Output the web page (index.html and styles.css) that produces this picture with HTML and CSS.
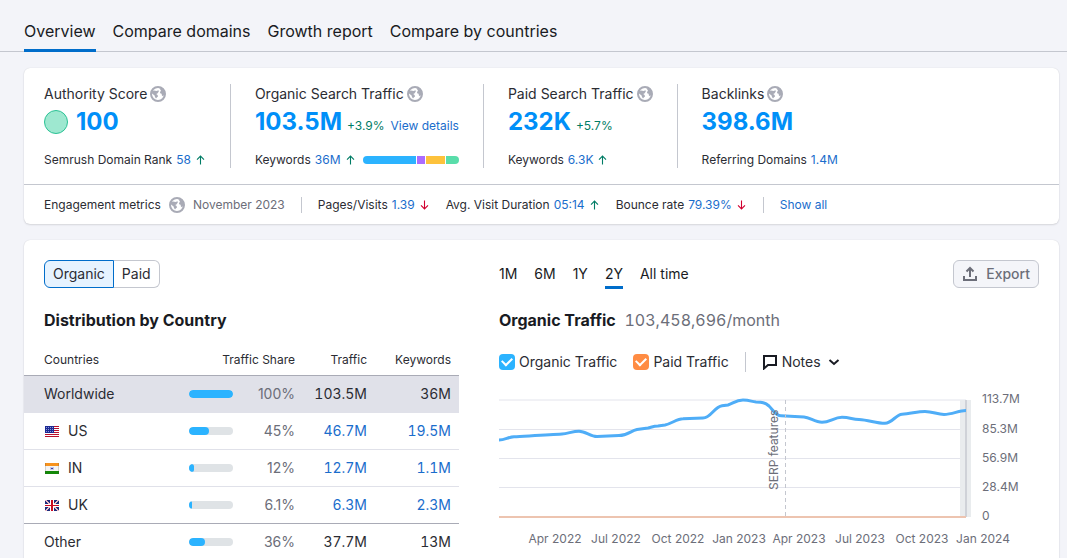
FILE: index.html
```html
<!DOCTYPE html>
<html lang="en">
<head>
<meta charset="utf-8">
<meta name="viewport" content="width=device-width, initial-scale=1">
<title>Domain Overview</title>
<link rel="stylesheet" href="styles.css">
</head>
<body>
<svg class="defs" aria-hidden="true">
  <symbol id="globe" viewBox="0 0 16 16">
    <circle cx="8" cy="8" r="7" fill="none" stroke="currentColor" stroke-width="2"/>
    <path d="M1.500 5L4 4.400L6.500 5L8.600 4.200L8.800 5.600L7.400 7.400L6.200 8L7.600 9L8 10.400L6.800 11.600L6 12.400L5 11L4.600 9.400L2 7.600ZM9.400 2L12 2.600L14.400 5.500L14.500 8.600L13 10.200L11.900 9.400L11.600 7.800L10.200 7.200L10 6L11 4.800Z" fill="currentColor"/>
  </symbol>
  <symbol id="up" viewBox="0 0 10 10"><path d="M5 9.500V1.200M1.500 4.600L5 1.100L8.500 4.600" fill="none" stroke="currentColor" stroke-width="1.100"/></symbol>
  <symbol id="down" viewBox="0 0 10 10"><path d="M5 .5V8.800M1.500 5.400L5 8.900L8.500 5.400" fill="none" stroke="currentColor" stroke-width="1.100"/></symbol>
</svg>
<nav class="tabs" aria-label="Reports">
  <a class="tab tab-active" href="#overview" aria-current="page">Overview</a>
  <a class="tab" href="#domains">Compare domains</a>
  <a class="tab" href="#growth">Growth report</a>
  <a class="tab" href="#countries">Compare by countries</a>
</nav>
<main class="page">
  <section class="card" aria-label="Summary">
    <div class="stats">
      <div class="stat">
        <div class="stat-label">Authority Score <svg class="globe"><use href="#globe"/></svg></div>
        <div class="stat-value"><span class="score-dot"></span><a class="big" href="#score">100</a></div>
        <div class="stat-note">Semrush Domain Rank <a href="#rank">58</a> <svg class="arrow up"><use href="#up"/></svg></div>
      </div>
      <div class="stat">
        <div class="stat-label">Organic Search Traffic <svg class="globe"><use href="#globe"/></svg></div>
        <div class="stat-value"><a class="big" href="#organic">103.5M</a><span class="change">+3.9%</span><a class="details" href="#details">View details</a></div>
        <div class="stat-note">Keywords <a href="#keywords">36M</a> <svg class="arrow up"><use href="#up"/></svg>
          <span class="split"><i class="split-blue"></i><i class="split-violet"></i><i class="split-yellow"></i><i class="split-green"></i></span>
        </div>
      </div>
      <div class="stat">
        <div class="stat-label">Paid Search Traffic <svg class="globe"><use href="#globe"/></svg></div>
        <div class="stat-value"><a class="big" href="#paid">232K</a><span class="change">+5.7%</span></div>
        <div class="stat-note">Keywords <a href="#paid-keywords">6.3K</a> <svg class="arrow up"><use href="#up"/></svg></div>
      </div>
      <div class="stat">
        <div class="stat-label">Backlinks <svg class="globe"><use href="#globe"/></svg></div>
        <div class="stat-value"><a class="big" href="#backlinks">398.6M</a></div>
        <div class="stat-note">Referring Domains <a href="#referring">1.4M</a></div>
      </div>
    </div>
    <div class="metrics">
      <div class="metrics-title">Engagement metrics <svg class="globe"><use href="#globe"/></svg> <span class="muted">November 2023</span></div>
      <div class="metrics-list">
        <span class="metric">Pages/Visits <a href="#visits">1.39</a> <svg class="arrow down"><use href="#down"/></svg></span>
        <span class="metric">Avg. Visit Duration <a href="#duration">05:14</a> <svg class="arrow up"><use href="#up"/></svg></span>
        <span class="metric">Bounce rate <a href="#bounce">79.39%</a> <svg class="arrow down"><use href="#down"/></svg></span>
      </div>
      <a class="show-all" href="#all">Show all</a>
    </div>
  </section>

  <section class="card report">
    <div class="countries">
      <div class="toggle" role="group" aria-label="Traffic type">
        <button class="toggle-item toggle-on" type="button" aria-pressed="true">Organic</button>
        <button class="toggle-item" type="button" aria-pressed="false">Paid</button>
      </div>
      <h2 class="title">Distribution by Country</h2>
      <table class="table">
        <colgroup><col class="col-name"><col class="col-bar"><col class="col-share"><col class="col-traffic"><col class="col-keywords"></colgroup>
        <thead>
          <tr><th class="name">Countries</th><th colspan="2">Traffic Share</th><th>Traffic</th><th>Keywords</th></tr>
        </thead>
        <tbody>
          <tr class="selected"><td class="name">Worldwide</td><td><div class="bar"><div class="fill" style="width:100%"></div></div></td><td class="share">100%</td><td>103.5M</td><td>36M</td></tr>
          <tr><td class="name"><svg class="flag" viewBox="0 0 14 11"><rect width="14" height="11" fill="#fff"/><path d="M0 .5H14M0 2.500H14M0 4.500H14M0 6.500H14M0 8.500H14M0 10.500H14" stroke="#b8102c"/><rect width="9" height="7" fill="#1c2a94"/><path d="M1 1.500H9M1 3.500H9M1 5.500H9" stroke="#8f97d6" stroke-dasharray="1 1"/></svg>US</td><td><div class="bar"><div class="fill" style="width:45%"></div></div></td><td class="share">45%</td><td><a href="#us">46.7M</a></td><td><a href="#us-keywords">19.5M</a></td></tr>
          <tr><td class="name"><svg class="flag" viewBox="0 0 14 11"><rect width="14" height="11" fill="#f4f4f4"/><rect width="14" height="3" fill="#f7931e"/><rect y="8" width="14" height="3" fill="#138808"/><rect x="5" y="4" width="4" height="3" fill="#c3c7e8"/><rect x="6" y="5" width="2" height="1" fill="#3b46a5"/><path d="M.5 0V11M13.500 0V11" stroke="#444" stroke-opacity=".2"/></svg>IN</td><td><div class="bar"><div class="fill" style="width:12%"></div></div></td><td class="share">12%</td><td><a href="#in">12.7M</a></td><td><a href="#in-keywords">1.1M</a></td></tr>
          <tr class="before-other"><td class="name"><svg class="flag" viewBox="0 0 14 11"><rect width="14" height="11" fill="#1d2c7c"/><path d="M0 0L14 11M14 0L0 11" stroke="#e9b9c4" stroke-width="1.600"/><rect x="5" width="4" height="11" fill="#fff"/><rect y="4" width="14" height="3" fill="#fff"/><rect x="6" width="2" height="11" fill="#cc0a22"/><rect y="5" width="14" height="1" fill="#cc0a22"/></svg>UK</td><td><div class="bar"><div class="fill" style="width:6.1%"></div></div></td><td class="share">6.1%</td><td><a href="#uk">6.3M</a></td><td><a href="#uk-keywords">2.3M</a></td></tr>
          <tr><td class="name">Other</td><td><div class="bar"><div class="fill" style="width:36%"></div></div></td><td class="share">36%</td><td>37.7M</td><td>13M</td></tr>
        </tbody>
      </table>
    </div>

    <div class="traffic">
      <div class="toolbar">
        <div class="ranges" role="group" aria-label="Period">
          <button class="range" type="button">1M</button>
          <button class="range" type="button">6M</button>
          <button class="range" type="button">1Y</button>
          <button class="range range-on" type="button" aria-pressed="true">2Y</button>
          <button class="range" type="button">All time</button>
        </div>
        <button class="export" type="button"><svg class="export-icon" viewBox="0 0 16 16"><path d="M8 11V2.500M4.500 5.500L8 2L11.500 5.500M2 10V14H14V10" fill="none" stroke="currentColor" stroke-width="2"/></svg>Export</button>
      </div>
      <h2 class="title">Organic Traffic <span class="per-month">103,458,696/month</span></h2>
      <div class="legend">
        <label class="check"><input class="box box-blue" type="checkbox" checked>Organic Traffic</label>
        <label class="check"><input class="box box-orange" type="checkbox" checked>Paid Traffic</label>
        <button class="notes" type="button"><svg class="note-icon" viewBox="0 0 16 16"><path d="M2 2H14V11H6L2 14.500Z" fill="none" stroke="currentColor" stroke-width="2"/></svg>Notes<svg class="chevron" viewBox="0 0 12 12"><path d="M1.500 4L6 8L10.500 4" fill="none" stroke="currentColor" stroke-width="2"/></svg></button>
      </div>
      <svg class="chart" viewBox="0 0 540 160" role="img" aria-label="Organic and paid traffic, 2022 to 2024">
        <path d="M0 10H467M0 39.500H467M0 68.500H467M0 97.500H467" stroke="#e3e4ec"/>
        <rect x="461" y="10" width="11" height="117" fill="#e9ecee"/>
        <rect x="466" y="10" width="2" height="117" fill="#cfd2d8"/>
        <path class="line" d="M0 50C6 50 9 47 15 46.700C27 46 50 45 63 44C69 43.500 74 41.200 80 41.200C87 41.200 91 46.500 98 46.500L120 45.500C129 45.500 132 40.500 138 39.500L149 38C153 37 155 36 159 36L166 35C173 33.500 178 28.700 184 28.700L204 28C212 28 215 17 223 15.800L229 15C234 13.500 237 10 244 10C251 10 252 11.500 257 12C263 12.300 266 12.500 270 16C274 20 277 25.800 282 25.800L305 27C311 27.500 316 32.300 323 32.300C331 32.300 335 27.300 343 27.300C351 27.300 353 29.300 360 29.500C370 30 377 33.300 386 33.300C393 33.300 397 24.500 403 24.200C411 24 418 21.500 426 21.500C434 21.500 438 24.500 445 24.500C453 24.500 460 20.500 467 20.500"/>
        <path d="M0 127H467" stroke="#edc4b0" stroke-width="2"/>
        <path d="M286.500 10V127" stroke="#c4c7cf" stroke-dasharray="4 3"/>
        <text class="axis" transform="translate(279 100) rotate(-90)">SERP features</text>
        <g class="axis">
          <text x="483" y="13">113.7M</text><text x="483" y="43">85.3M</text><text x="483" y="72">56.9M</text><text x="483" y="101">28.4M</text><text x="483" y="130">0</text>
        </g>
        <g class="axis axis-x">
          <text x="56" y="153">Apr 2022</text><text x="117" y="153">Jul 2022</text><text x="179" y="153">Oct 2022</text><text x="240" y="153">Jan 2023</text><text x="300" y="153">Apr 2023</text><text x="361" y="153">Jul 2023</text><text x="423" y="153">Oct 2023</text><text x="484" y="153">Jan 2024</text>
        </g>
      </svg>
    </div>
  </section>
</main>
</body>
</html>
```

FILE: styles.css
```css
* { box-sizing: border-box; }
body {
  margin: 0;
  background: #f3f4f9;
  color: #2b2c33;
  font: 14px/20px Inter, "Liberation Sans", sans-serif;
}
a { color: #1a6dcc; text-decoration: none; }
button { font: inherit; color: inherit; background: none; border: 0; padding: 0; cursor: pointer; }
.defs { display: block; width: 0; height: 0; }

.tabs {
  display: flex;
  gap: 17px;
  padding: 12px 24px 0;
  border-bottom: 1px solid #c4c7cf;
}
.tab {
  padding: 8px 0 7px;
  margin-bottom: -1px;
  border-bottom: 3px solid transparent;
  font-size: 16px;
  line-height: 22px;
  color: #191b23;
}
.tab-active { border-bottom-color: #006dca; }

.page {
  display: flex;
  flex-direction: column;
  gap: 16px;
  padding: 16px 8px 0 24px;
}
.card {
  background: #fff;
  border-radius: 6px;
  box-shadow: 0 0 1px rgba(25, 27, 35, .16), 0 1px 2px rgba(25, 27, 35, .12);
}

.stats { display: flex; padding: 16px 20px; border-bottom: 1px solid #c4c7cf; }
.stat + .stat { margin-left: 24px; padding-left: 24px; border-left: 1px solid #c4c7cf; }
.stat-label { display: flex; align-items: center; gap: 3px; }
.globe { width: 16px; height: 16px; color: #a9abb6; }
.stat-value { display: flex; align-items: baseline; height: 36px; line-height: 36px; font-size: 12px; }
.big { font-size: 24px; font-weight: 700; color: #008ff8; }
.score-dot {
  align-self: center;
  width: 24px;
  height: 24px;
  margin-right: 8px;
  border: 1px solid #2bc295;
  border-radius: 50%;
  background: #9ee8d0;
}
.change { margin-left: 5px; color: #007c65; }
.details { margin-left: 6px; }
.stat-note { display: flex; align-items: center; gap: 4px; margin-top: 12px; font-size: 12px; line-height: 16px; }
.arrow { width: 11px; height: 10px; }
.up { color: #007c65; }
.down { color: #d1002f; }
.split { display: flex; flex: 1; gap: 1px; height: 8px; min-width: 96px; margin-left: 3px; border-radius: 4px; overflow: hidden; }
.split-blue { flex: 53; background: #2bb3ff; }
.split-violet { flex: 8; background: #ab6cfe; }
.split-yellow { flex: 19; background: #fdc23c; }
.split-green { flex: 13; background: #59ddaa; }

.metrics { display: flex; align-items: center; gap: 16px; padding: 12px 20px 11px; font-size: 12px; line-height: 16px; }
.metrics-title { display: flex; align-items: center; gap: 8px; }
.metrics-list { display: flex; gap: 16px; padding: 0 16px; border: solid #c4c7cf; border-width: 0 1px; }
.metric { display: flex; align-items: center; gap: 4px; }
.muted { color: #6c6e79; }

.report { display: grid; grid-template-columns: minmax(0, 435px) minmax(0, 1fr); gap: 40px; padding: 20px 20px 20px 0; }
.toggle { display: flex; margin-left: 20px; }
.toggle-item { height: 28px; padding: 0 8px; border: 1px solid #c4c7cf; border-left: 0; border-radius: 0 6px 6px 0; }
.toggle-on { border: 1px solid #006dca; border-radius: 6px 0 0 6px; background: #e6f3ff; }
.title { margin: 20px 0 0; font-size: 16px; line-height: 24px; font-weight: 700; color: #191b23; }
.countries .title { margin-left: 20px; }

.table { width: 100%; margin-top: 12px; border-collapse: separate; border-spacing: 0; table-layout: fixed; }
.col-name { width: 165px; }
.col-bar { width: 44px; }
.col-share { width: 62px; }
.col-traffic { width: 72px; }
.col-keywords { width: 92px; }
th { height: 32px; padding: 0; font-size: 12px; font-weight: 400; text-align: right; border-bottom: 1px solid #a9abb6; }
td { height: 37px; padding: 0; text-align: right; border-bottom: 1px solid #e0e1e9; font-variant-numeric: tabular-nums; }
th:last-child, td:last-child { padding-right: 8px; }
.name { padding-left: 20px; text-align: left; }
.selected td { background: #e0e1e9; }
.before-other td { border-bottom-color: #a9abb6; }
.share { color: #6c6e79; font-variant-numeric: normal; }
.flag { width: 14px; height: 11px; margin: 0 9px 0 1px; vertical-align: -1px; shape-rendering: crispEdges; }
.bar { height: 8px; border-radius: 4px; background: #dfe3e6; overflow: hidden; }
.fill { height: 8px; border-radius: 4px; background: #2bb3ff; }

.toolbar { display: flex; justify-content: space-between; align-items: flex-start; }
.ranges { display: flex; gap: 17px; }
.range { height: 29px; padding-top: 2px; border-bottom: 3px solid transparent; color: #191b23; }
.range-on { border-bottom-color: #006dca; }
.export {
  display: flex;
  align-items: center;
  gap: 8px;
  height: 28px;
  padding: 0 8px;
  border: 1px solid #c4c7cf;
  border-radius: 6px;
  background: #f4f5f9;
  color: #6c6e79;
  font-weight: 500;
}
.export-icon { width: 16px; height: 16px; }
.traffic .title { margin-top: 19px; }
.per-month { margin-left: 5px; font-weight: 400; color: #6c6e79; font-variant-numeric: tabular-nums; }
.legend { display: flex; align-items: center; gap: 16px; margin-top: 20px; }
.check { display: flex; align-items: center; gap: 4px; }
.box {
  appearance: none;
  display: grid;
  place-items: center;
  width: 16px;
  height: 16px;
  margin: 0;
  border-radius: 4px;
}
.box::after {
  content: "";
  width: 8px;
  height: 5px;
  margin-bottom: 3px;
  border: solid #fff;
  border-width: 0 0 2px 2px;
  transform: rotate(-45deg);
}
.box-blue { background: #2bb3ff; }
.box-orange { background: #ff8c43; }
.notes { display: flex; align-items: center; gap: 4px; padding-left: 16px; border-left: 1px solid #c4c7cf; }
.note-icon { width: 16px; height: 16px; color: #191b23; }
.chevron { width: 12px; height: 12px; margin-left: 3px; color: #191b23; }
.chart { display: block; width: 100%; margin-top: 18px; overflow: visible; }
.line { fill: none; stroke: #4fadf7; stroke-width: 3; }
.axis { font-size: 12px; fill: #6c6e79; }
.axis-x { text-anchor: middle; }
```
